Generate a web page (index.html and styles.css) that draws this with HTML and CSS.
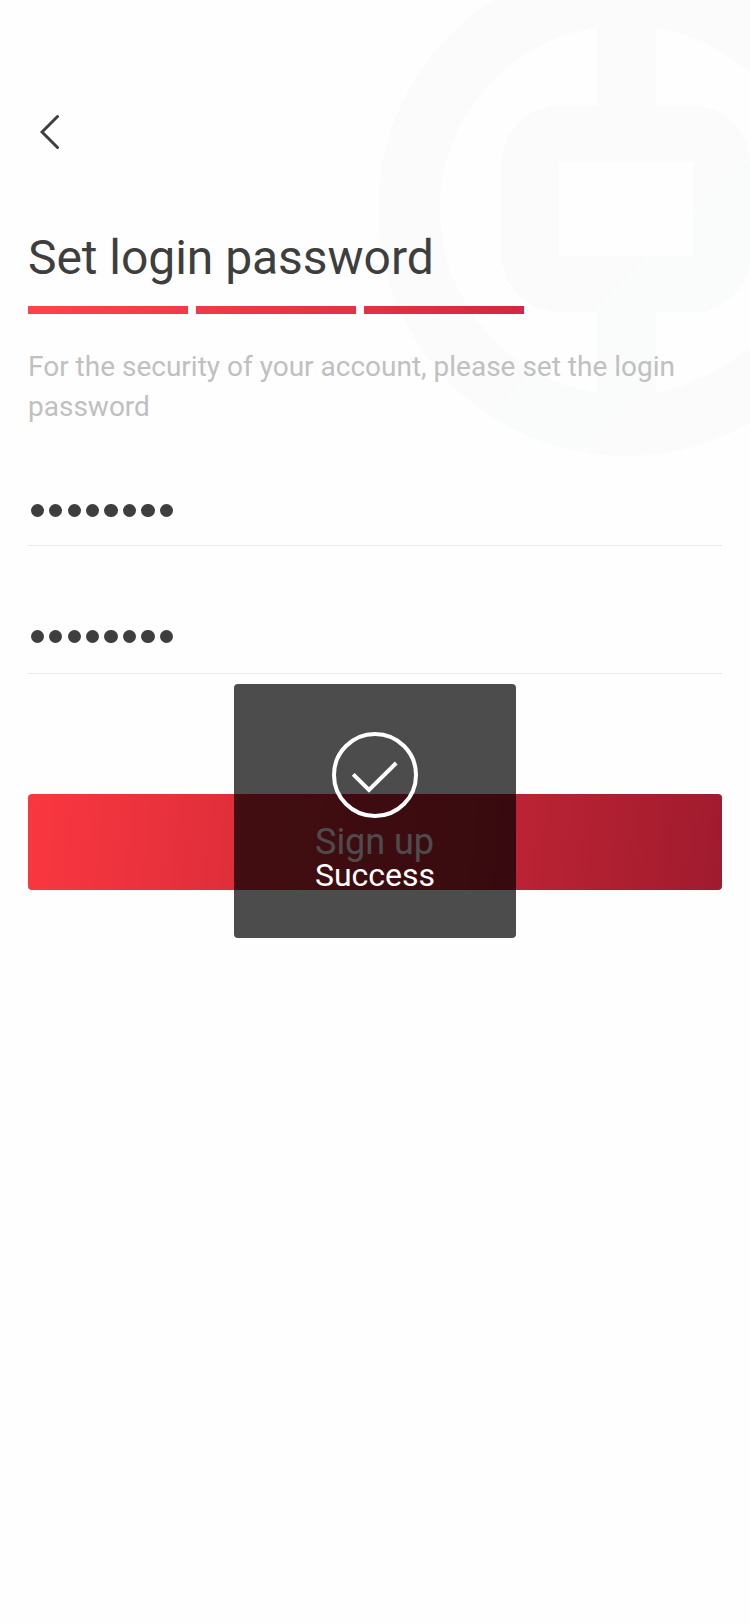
FILE: index.html
```html
<!DOCTYPE html>
<html lang="en">
<head>
<meta charset="utf-8">
<title>Set login password</title>
<link rel="stylesheet" href="styles.css">
</head>
<body>
<main class="page">
  <svg class="watermark" width="372" height="456" viewBox="378 0 372 456" aria-hidden="true">
    <defs>
      <linearGradient id="tint" gradientUnits="userSpaceOnUse" x1="490" y1="150" x2="760" y2="420">
        <stop offset="0.48" stop-color="#fbfbfb"/>
        <stop offset="0.51" stop-color="#fafcfb"/>
        <stop offset="0.67" stop-color="#fafcfb"/>
        <stop offset="0.76" stop-color="#fbfbfb"/>
      </linearGradient>
    </defs>
    <path fill="url(#tint)" fill-rule="evenodd" d="M378 209a248 247 0 1 0 496 0a248 247 0 1 0-496 0ZM598 27A186.500 185 0 0 0 598 392.700V312H558A56 56 0 0 1 502 256V162A56 56 0 0 1 558 106H598ZM656 27.500V106H694A56 56 0 0 1 750 162V256A56 56 0 0 1 694 312H656V392A186.500 185 0 0 0 656 27.500ZM559 162H693V256H559Z"/>
  </svg>
  <header class="nav">
    <svg class="back" width="20" height="36" viewBox="0 0 20 36" fill="none" stroke="#3e3e3e" stroke-width="3" stroke-linecap="round" aria-label="Back"><path d="M17.500 2.500L2 18L17.500 33.500"/></svg>
  </header>
  <h1 class="title">Set login password</h1>
  <div class="steps"><i class="step first"></i><i class="step second"></i><i class="step third"></i></div>
  <p class="hint">For the security of your account, please set the login password</p>
  <div class="field"><i></i><i></i><i></i><i></i><i></i><i></i><i></i><i></i></div>
  <div class="field confirm"><i></i><i></i><i></i><i></i><i></i><i></i><i></i><i></i></div>
  <button class="submit">Sign up</button>
  <div class="toast">
    <svg class="check" width="86" height="86" viewBox="0 0 86 86" fill="none" stroke="#fff" stroke-width="4"><circle cx="43" cy="43" r="41"/><path d="M21.200 42.300L37 58L64.200 31"/></svg>
    <span class="message">Success</span>
  </div>
</main>
</body>
</html>
```
FILE: styles.css
```css
* { box-sizing: border-box; }
body { margin: 0; background: #fefefe; font-family: Roboto, sans-serif; color: #3e3e3e; }
.page { position: relative; height: 1624px; padding: 114px 28px 0; overflow: hidden; display: flex; flex-direction: column; }
.page > * { flex-shrink: 0; }
.watermark { position: absolute; top: 0; right: 0; z-index: -1; }
.nav { height: 36px; padding-left: 12px; }
.back { display: block; }
.title { margin: 76px 0 0; height: 64px; line-height: 64px; font-size: 48px; font-weight: 400; letter-spacing: -0.050px; white-space: nowrap; }
.steps { display: flex; gap: 8px; margin-top: 16px; }
.step { width: 160px; height: 8px; }
.first { background: linear-gradient(90deg, #ff434b, #f03c49); }
.second { background: linear-gradient(90deg, #ef3b49, #e23246); }
.third { background: linear-gradient(90deg, #e23246, #d32841); }
.hint { margin: 33px 0 0; font-size: 28px; line-height: 40px; color: #c0c0c0; }
.field { display: flex; align-items: center; gap: 5.070px; margin-top: 43px; height: 76px; padding: 5.500px 0 0 2.600px; border-bottom: 1px solid #e9e9e9; }
.field i { width: 13.400px; height: 13.400px; border-radius: 50%; background: #3e3e3e; }
.field.confirm { padding-top: 1.500px; margin-top: 52px; }
.submit { margin: 120px 0 0; height: 96px; padding: 0 1px 0 0; border: 0; border-radius: 4px; background: linear-gradient(95deg, #fa3740, #a01b2e); color: #fff; font: 36px Roboto, sans-serif; letter-spacing: -0.050px; }
.toast { position: absolute; left: 234px; top: 684px; width: 282px; height: 254px; padding-top: 48px; border-radius: 4px; background: rgba(0, 0, 0, 0.7); display: flex; flex-direction: column; align-items: center; gap: 38px; }
.message { color: #fff; font-size: 32px; line-height: 38px; }
```
